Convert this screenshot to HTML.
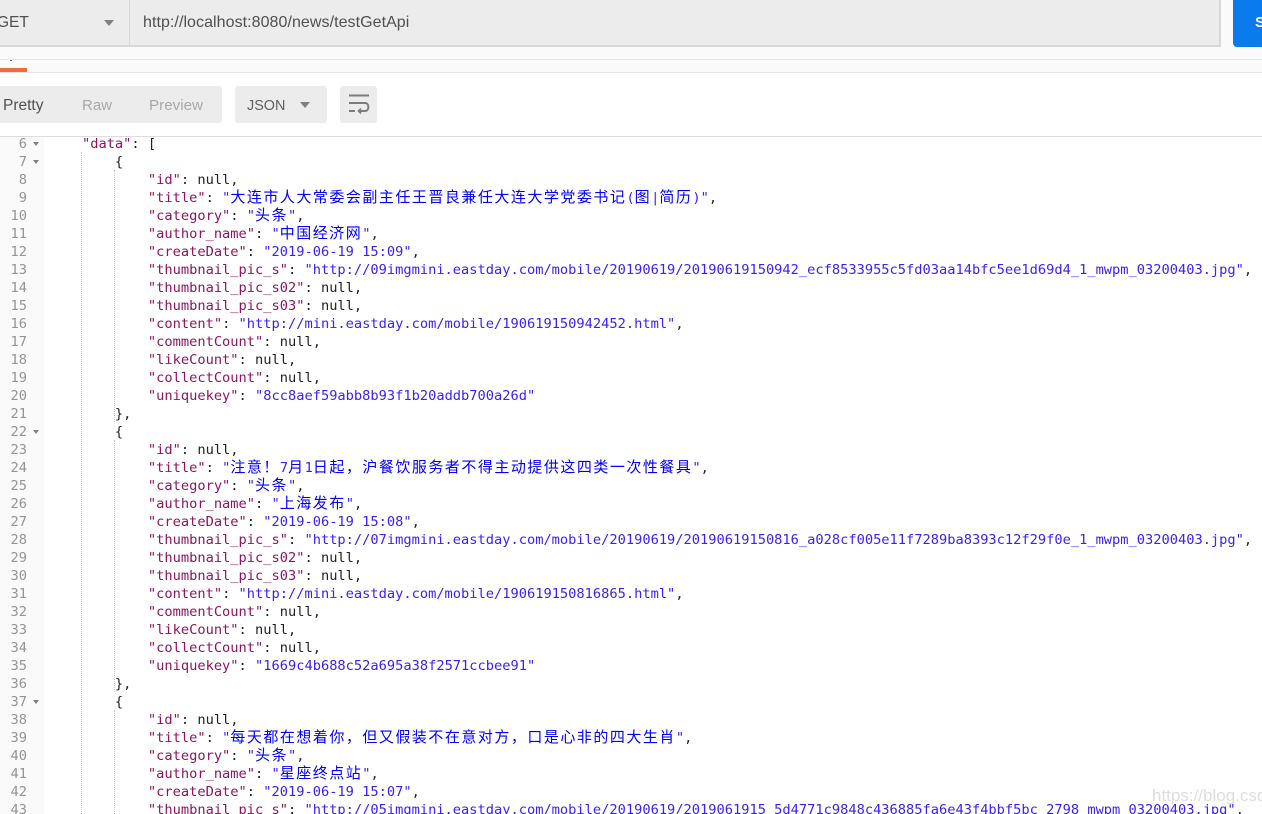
<!DOCTYPE html>
<html><head><meta charset="utf-8">
<style>
html,body{margin:0;padding:0;background:#fff}
#p{position:relative;width:1262px;height:814px;overflow:hidden;background:#fff;font-family:"Liberation Sans","Noto Sans CJK SC",sans-serif}
.a{position:absolute}
.tri{position:absolute;width:0;height:0;border-left:5px solid transparent;border-right:5px solid transparent;border-top:6px solid #808080}
.g{position:absolute;left:0;top:137px;width:44px;height:677px;background:#fafafa}
.n{position:absolute;left:0;width:27px;margin-top:1px;text-align:right;font:13.7px/18px "DejaVu Sans Mono",monospace;color:#949494}
.f{position:absolute;left:33px;width:0;height:0;border-left:3.5px solid transparent;border-right:3.5px solid transparent;border-top:4px solid #808080}
#c{position:absolute;left:49px;top:135px;margin:0;font:13.7px/18px "DejaVu Sans Mono","WenQuanYi Zen Hei",monospace;color:#222;white-space:pre}
#c i{font-style:normal;color:#8e1560}
#c b{font-weight:normal;color:#3a22f5}
#c u{text-decoration:none;color:#0000ff;font-family:"WenQuanYi Zen Hei","Noto Sans CJK SC",sans-serif;font-size:15px;letter-spacing:1.5px;line-height:1}
.v{position:absolute;width:0;border-left:1px dotted #c8c8c8}
</style></head><body><div id="p">
<div class="a" style="left:0;top:0;width:1262px;height:72px;background:#fafafa"></div>
<div class="a" style="left:0;top:0;width:1219px;height:45px;background:#ececec;border-bottom:2px solid #d8d8d8;border-right:2px solid #d8d8d8"></div>
<div class="a" style="left:129px;top:0;width:1px;height:46px;background:#d8d8d8"></div>
<div class="a" style="left:-3px;top:13px;font-size:15.5px;line-height:20px;color:#505050">GET</div>
<div class="tri" style="left:104px;top:20px"></div>
<div class="a" style="left:143px;top:13px;font-size:16px;line-height:20px;color:#505050;letter-spacing:.06px;white-space:nowrap">http://localhost:8080/news/testGetApi</div>
<div class="a" style="left:1233px;top:0;width:29px;height:47px;background:#097bed;border-radius:0 0 0 4px"></div>
<div class="a" style="left:1255px;top:13px;font-size:15px;line-height:20px;font-weight:bold;color:#fff">S</div>
<div class="a" style="left:0;top:59px;width:1262px;height:1px;background:#e6e6e6"></div>
<div class="a" style="left:10px;top:60px;width:2px;height:1px;background:#666"></div>
<div class="a" style="left:0;top:72px;width:1262px;height:1px;background:#e4e4e4"></div>
<div class="a" style="left:0;top:68px;width:27px;height:4px;background:#f26b3a"></div>

<div class="a" style="left:-4px;top:86px;width:226px;height:37px;background:#ececec;border-radius:3px"></div>
<div class="a" style="left:3px;top:96px;font-size:15.5px;line-height:20px;color:#505050">Pretty</div>
<div class="a" style="left:82px;top:96px;font-size:15px;line-height:20px;color:#a8a8a8">Raw</div>
<div class="a" style="left:149px;top:96px;font-size:15.2px;line-height:20px;color:#a8a8a8">Preview</div>
<div class="a" style="left:235px;top:86px;width:92px;height:37px;background:#ececec;border-radius:3px"></div>
<div class="a" style="left:247px;top:96px;font-size:14.4px;line-height:20px;color:#606060">JSON</div>
<div class="tri" style="left:300px;top:102px"></div>
<div class="a" style="left:340px;top:86px;width:37px;height:37px;background:#ececec;border-radius:3px"></div>
<svg class="a" style="left:340px;top:86px" width="37" height="37" viewBox="0 0 37 37" fill="none" stroke="#7c7c7c" stroke-width="2"><path d="M9 9.500H29"/><path d="M9 17H25C29.500 17 29.500 25 25 25H19"/><path d="M9 25H15"/><path d="M21 22.500L18.500 25L21 27.500" stroke-width="1.600"/></svg>
<div class="a" style="left:0;top:136px;width:1262px;height:1px;background:#dcdcdc"></div>

<div class="g"></div>
<div class="v" style="left:81px;top:152px;height:662px"></div>
<div class="v" style="left:114px;top:170px;height:252px"></div>
<div class="v" style="left:114px;top:440px;height:252px"></div>
<div class="v" style="left:114px;top:710px;height:104px"></div>

<div class="n" style="top:134px">6</div><div class="n" style="top:152px">7</div><div class="n" style="top:170px">8</div><div class="n" style="top:188px">9</div><div class="n" style="top:206px">10</div><div class="n" style="top:224px">11</div><div class="n" style="top:242px">12</div><div class="n" style="top:260px">13</div><div class="n" style="top:278px">14</div><div class="n" style="top:296px">15</div><div class="n" style="top:314px">16</div><div class="n" style="top:332px">17</div><div class="n" style="top:350px">18</div><div class="n" style="top:368px">19</div><div class="n" style="top:386px">20</div><div class="n" style="top:404px">21</div><div class="n" style="top:422px">22</div><div class="n" style="top:440px">23</div><div class="n" style="top:458px">24</div><div class="n" style="top:476px">25</div><div class="n" style="top:494px">26</div><div class="n" style="top:512px">27</div><div class="n" style="top:530px">28</div><div class="n" style="top:548px">29</div><div class="n" style="top:566px">30</div><div class="n" style="top:584px">31</div><div class="n" style="top:602px">32</div><div class="n" style="top:620px">33</div><div class="n" style="top:638px">34</div><div class="n" style="top:656px">35</div><div class="n" style="top:674px">36</div><div class="n" style="top:692px">37</div><div class="n" style="top:710px">38</div><div class="n" style="top:728px">39</div><div class="n" style="top:746px">40</div><div class="n" style="top:764px">41</div><div class="n" style="top:782px">42</div><div class="n" style="top:800px">43</div>
<div class="f" style="top:142px"></div><div class="f" style="top:160px"></div><div class="f" style="top:430px"></div><div class="f" style="top:700px"></div>

<pre id="c">    <i>"data"</i>: [
        {
            <i>"id"</i>: null,
            <i>"title"</i>: <b>"</b><u>大连市人大常委会副主任王晋良兼任大连大学党委书记</u><b>(</b><u>图</u><b>|</b><u>简历</u><b>)"</b>,
            <i>"category"</i>: <b>"</b><u>头条</u><b>"</b>,
            <i>"author_name"</i>: <b>"</b><u>中国经济网</u><b>"</b>,
            <i>"createDate"</i>: <b>"2019-06-19 15:09"</b>,
            <i>"thumbnail_pic_s"</i>: <b>"http://09imgmini.eastday.com/mobile/20190619/20190619150942_ecf8533955c5fd03aa14bfc5ee1d69d4_1_mwpm_03200403.jpg"</b>,
            <i>"thumbnail_pic_s02"</i>: null,
            <i>"thumbnail_pic_s03"</i>: null,
            <i>"content"</i>: <b>"http://mini.eastday.com/mobile/190619150942452.html"</b>,
            <i>"commentCount"</i>: null,
            <i>"likeCount"</i>: null,
            <i>"collectCount"</i>: null,
            <i>"uniquekey"</i>: <b>"8cc8aef59abb8b93f1b20addb700a26d"</b>
        },
        {
            <i>"id"</i>: null,
            <i>"title"</i>: <b>"</b><u>注意！</u><b>7</b><u>月</u><b>1</b><u>日起，沪餐饮服务者不得主动提供这四类一次性餐具</u><b>"</b>,
            <i>"category"</i>: <b>"</b><u>头条</u><b>"</b>,
            <i>"author_name"</i>: <b>"</b><u>上海发布</u><b>"</b>,
            <i>"createDate"</i>: <b>"2019-06-19 15:08"</b>,
            <i>"thumbnail_pic_s"</i>: <b>"http://07imgmini.eastday.com/mobile/20190619/20190619150816_a028cf005e11f7289ba8393c12f29f0e_1_mwpm_03200403.jpg"</b>,
            <i>"thumbnail_pic_s02"</i>: null,
            <i>"thumbnail_pic_s03"</i>: null,
            <i>"content"</i>: <b>"http://mini.eastday.com/mobile/190619150816865.html"</b>,
            <i>"commentCount"</i>: null,
            <i>"likeCount"</i>: null,
            <i>"collectCount"</i>: null,
            <i>"uniquekey"</i>: <b>"1669c4b688c52a695a38f2571ccbee91"</b>
        },
        {
            <i>"id"</i>: null,
            <i>"title"</i>: <b>"</b><u>每天都在想着你，但又假装不在意对方，口是心非的四大生肖</u><b>"</b>,
            <i>"category"</i>: <b>"</b><u>头条</u><b>"</b>,
            <i>"author_name"</i>: <b>"</b><u>星座终点站</u><b>"</b>,
            <i>"createDate"</i>: <b>"2019-06-19 15:07"</b>,
            <i>"thumbnail_pic_s"</i>: <b>"http://05imgmini.eastday.com/mobile/20190619/2019061915_5d4771c9848c436885fa6e43f4bbf5bc_2798_mwpm_03200403.jpg"</b>,</pre>
<div class="a" style="left:1152px;top:785px;font-size:17px;line-height:22px;color:#d2d2d2;opacity:.75;white-space:nowrap">https://blog.csdn</div>
</div></body></html>
